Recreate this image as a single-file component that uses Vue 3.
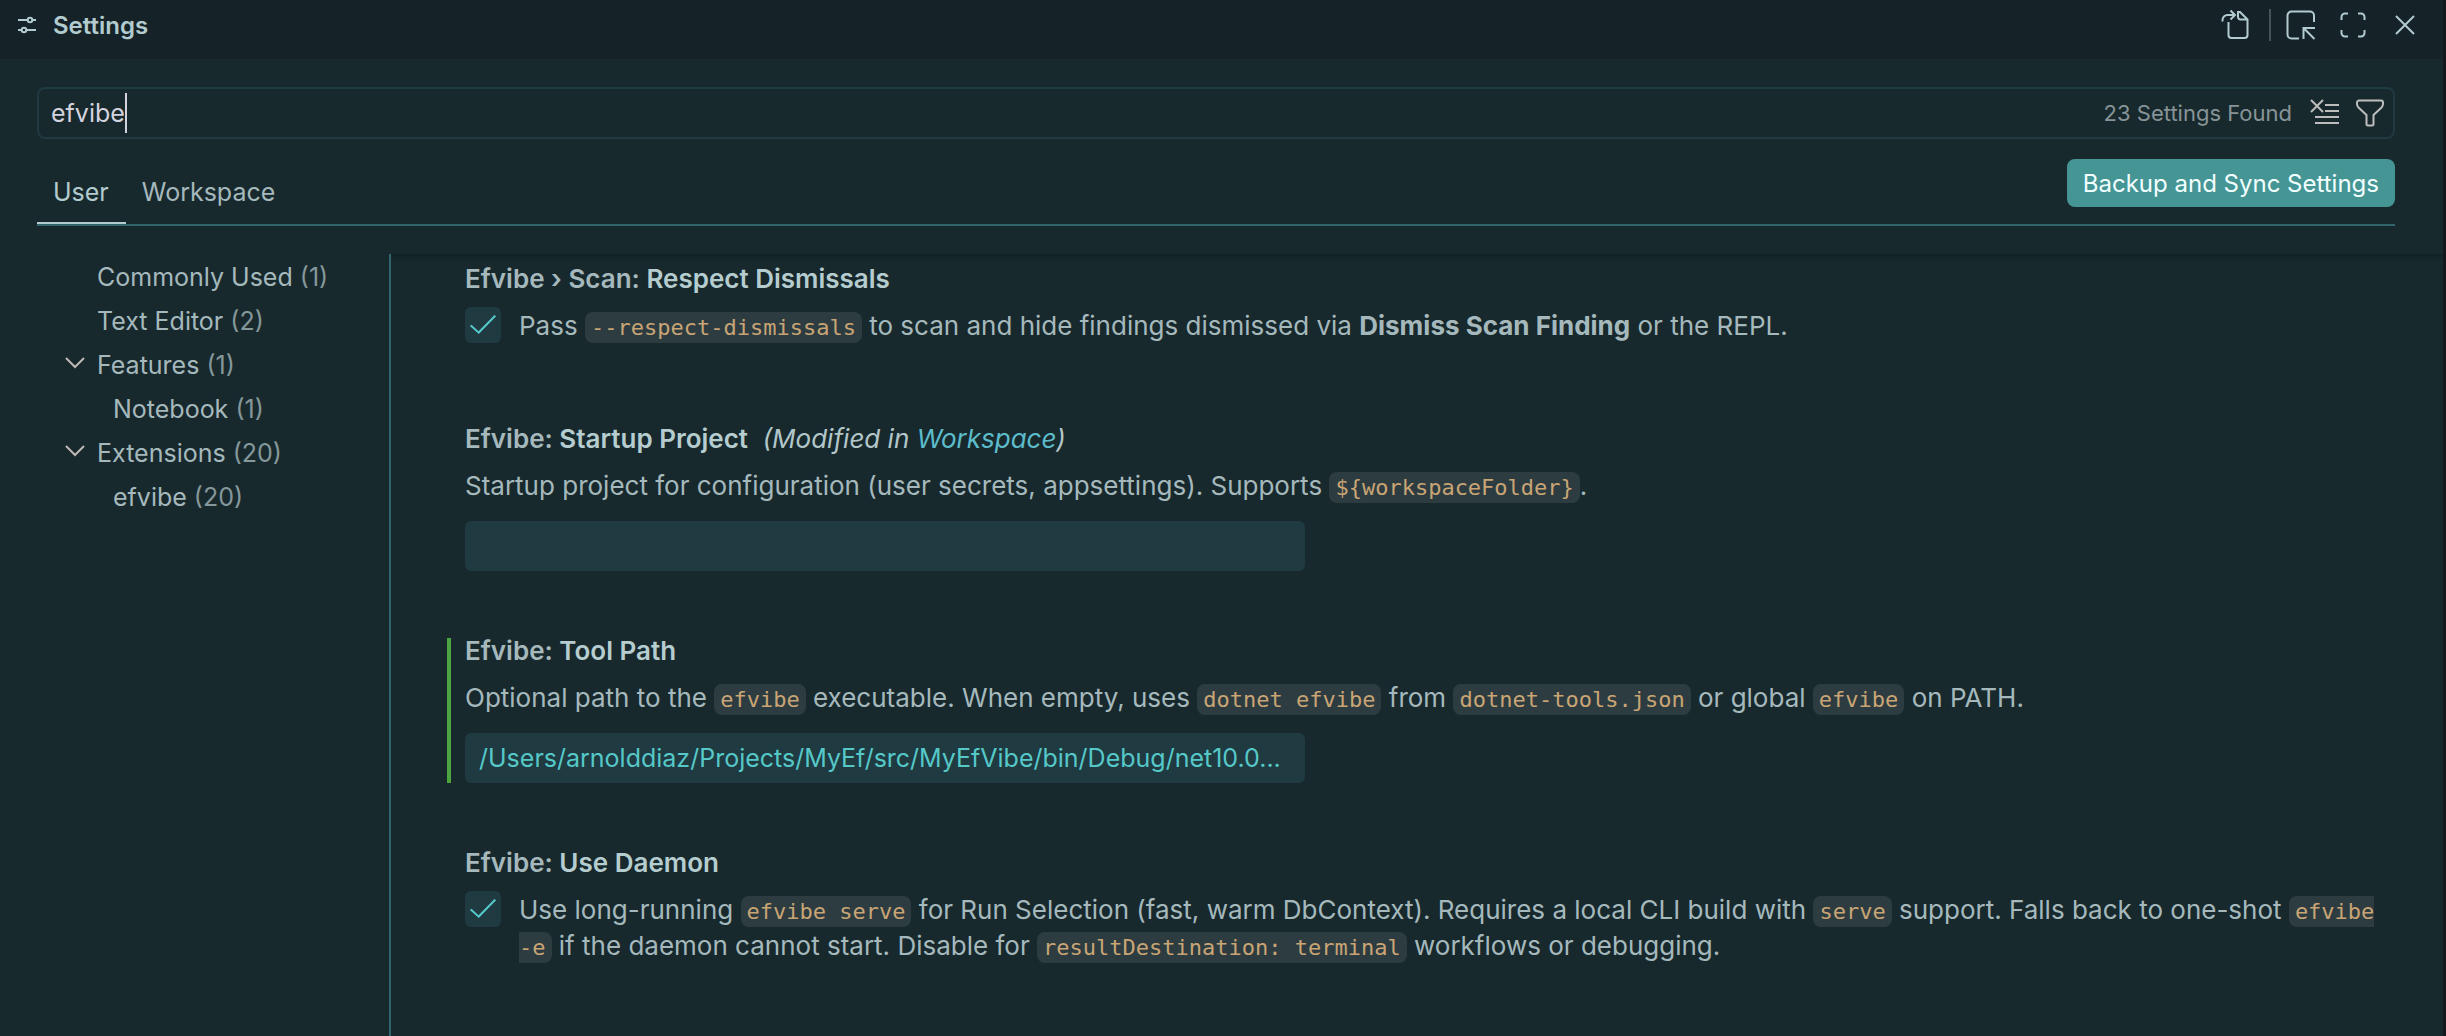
<template>
  <div class="window">
    <div class="settings-editor">
      <header class="title-bar">
        <svg class="title-icon" viewBox="0 0 20 18" aria-hidden="true">
          <path d="M1 4h9M16 4h3M1 14h3M10 14h9" />
          <circle cx="13" cy="4" r="2.3" />
          <circle cx="7" cy="14" r="2.3" />
        </svg>
        <h1>Settings</h1>
        <div class="title-actions">
          <button type="button" aria-label="Open Settings (JSON)">
            <svg viewBox="0 0 32 32">
              <path d="M3.5 12.500V11a5 5 0 0 1 5-5h7M11.500 1.500L16 6l-4.500 4.500" />
              <path d="M9.500 13v13a3 3 0 0 0 3 3h13a3 3 0 0 0 3-3V10.500L21 3h-2v5a2.500 2.500 0 0 0 2.500 2.500h7" />
            </svg>
          </button>
          <span class="separator"></span>
          <button type="button" aria-label="Move into New Window">
            <svg viewBox="0 0 32 32">
              <path d="M14 29.500H6.500a4 4 0 0 1-4-4v-19a4 4 0 0 1 4-4H25a4 4 0 0 1 4 4V13" />
              <path d="M30 19H18.500v11M19 19.500L29.500 30" />
            </svg>
          </button>
          <button type="button" aria-label="Maximize">
            <svg viewBox="0 0 32 32">
              <path d="M4.500 11V8a3.500 3.500 0 0 1 3.500-3.500h3M21 4.500h3A3.500 3.500 0 0 1 27.500 8v3M27.500 21v3a3.500 3.500 0 0 1-3.500 3.500h-3M11 27.500H8A3.500 3.500 0 0 1 4.500 24v-3" />
            </svg>
          </button>
          <button type="button" aria-label="Close">
            <svg viewBox="0 0 32 32"><path d="M7 7l18 18M25 7L7 25" /></svg>
          </button>
        </div>
      </header>

      <div class="search-box">
        <input v-model="query" class="search-input" type="text" size="6" aria-label="Search settings" />
        <span class="caret"></span>
        <span class="result-count">23 Settings Found</span>
        <button type="button" aria-label="Clear Settings Search Input">
          <svg viewBox="0 0 32 32">
            <path d="M3 3l12 12M15 3L3 15M17 8h14M17 14h14M7 20h24M7 26h24" />
          </svg>
        </button>
        <button type="button" aria-label="Filter Settings">
          <svg viewBox="0 0 32 32">
            <path d="M5 3.500h22a2 2 0 0 1 2 2V7a5 5 0 0 1-1.500 3.500L19.500 18v9a1.500 1.500 0 0 1-1.500 1.500h-4a1.500 1.500 0 0 1-1.500-1.500v-9L4.500 10.500A5 5 0 0 1 3 7V5.500a2 2 0 0 1 2-2z" />
          </svg>
        </button>
      </div>

      <div class="tab-row">
        <nav class="tabs">
          <button
            v-for="tab in tabs"
            :key="tab"
            type="button"
            :class="['tab', { active: tab === activeTab }]"
            @click="activeTab = tab"
          >
            {{ tab }}
          </button>
        </nav>
        <button type="button" class="sync-button">Backup and Sync Settings</button>
      </div>

      <div class="body">
        <ul class="toc">
          <li
            v-for="entry in toc"
            :key="entry.label"
            :class="{ nested: entry.nested }"
          >
            <svg v-if="entry.open" class="chevron" viewBox="0 0 20 12" aria-hidden="true">
              <path d="M1 1l9 9 9-9" />
            </svg>
            <span>{{ entry.label }} <span class="count">({{ entry.count }})</span></span>
          </li>
        </ul>

        <main class="settings-list">
          <section
            v-for="item in settings"
            :key="item.label"
            :class="['setting', item.type, { modified: item.modified }]"
          >
            <h2>
              <span class="category">{{ item.category }}: </span>{{ item.label }}
              <em v-if="item.scope" class="scope">(Modified in <a href="#">{{ item.scope }}</a>)</em>
            </h2>
            <div class="setting-row">
              <input
                v-if="item.type === 'bool'"
                :id="item.id"
                v-model="item.value"
                type="checkbox"
                class="checkbox"
              />
              <label :for="item.id" class="description">
                <template v-for="(part, i) in item.description" :key="i">
                  <component :is="part.tag" v-if="part.tag">{{ part.text }}</component>
                  <template v-else>{{ part }}</template>
                </template>
              </label>
            </div>
            <input
              v-if="item.type === 'text'"
              :id="item.id"
              v-model="item.value"
              type="text"
              class="text-input"
            />
          </section>
        </main>
      </div>
    </div>
  </div>
</template>

<script setup>
import { reactive, ref } from "vue";

const query = ref("efvibe");

const tabs = ["User", "Workspace"];
const activeTab = ref("User");

const toc = [
  { label: "Commonly Used", count: 1 },
  { label: "Text Editor", count: 2 },
  { label: "Features", count: 1, open: true },
  { label: "Notebook", count: 1, nested: true },
  { label: "Extensions", count: 20, open: true },
  { label: "efvibe", count: 20, nested: true },
];

const code = (text) => ({ tag: "code", text });
const bold = (text) => ({ tag: "strong", text });

const settings = reactive([
  {
    id: "respect-dismissals",
    category: "Efvibe › Scan",
    label: "Respect Dismissals",
    type: "bool",
    value: true,
    description: [
      "Pass ",
      code("--respect-dismissals"),
      " to scan and hide findings dismissed via ",
      bold("Dismiss Scan Finding"),
      " or the REPL.",
    ],
  },
  {
    id: "startup-project",
    category: "Efvibe",
    label: "Startup Project",
    type: "text",
    value: "",
    scope: "Workspace",
    description: [
      "Startup project for configuration (user secrets, appsettings). Supports ",
      code("${workspaceFolder}"),
      ".",
    ],
  },
  {
    id: "tool-path",
    category: "Efvibe",
    label: "Tool Path",
    type: "text",
    value: "/Users/arnolddiaz/Projects/MyEf/src/MyEfVibe/bin/Debug/net10.0...",
    modified: true,
    description: [
      "Optional path to the ",
      code("efvibe"),
      " executable. When empty, uses ",
      code("dotnet efvibe"),
      " from ",
      code("dotnet-tools.json"),
      " or global ",
      code("efvibe"),
      " on PATH.",
    ],
  },
  {
    id: "use-daemon",
    category: "Efvibe",
    label: "Use Daemon",
    type: "bool",
    value: true,
    description: [
      "Use long-running ",
      code("efvibe serve"),
      " for Run Selection (fast, warm DbContext). Requires a local CLI build with ",
      code("serve"),
      " support. Falls back to one-shot ",
      code("efvibe -e"),
      " if the daemon cannot start. Disable for ",
      code("resultDestination: terminal"),
      " workflows or debugging.",
    ],
  },
]);
</script>

<style>
body {
  margin: 0;
  background: #18292d;
}
</style>

<style scoped>
.window {
  box-sizing: border-box;
  min-height: 100vh;
  display: flex;
  border-right: 3px solid #141a1c;
  background: #18292d;
  color: #a5b9bd;
  font-family: Inter, "Liberation Sans", sans-serif;
  font-size: 25px;
}

.settings-editor {
  flex: 1;
  min-width: 0;
  display: flex;
  flex-direction: column;
}

button,
input {
  font: inherit;
}

button {
  padding: 0;
  border: none;
  background: none;
  color: inherit;
  cursor: pointer;
}

svg {
  display: block;
  fill: none;
  stroke: currentColor;
  stroke-width: 2;
}

button svg {
  width: 32px;
  height: 32px;
}

.title-bar {
  display: flex;
  align-items: center;
  height: 50px;
  padding: 0 22px 9px 17px;
  background: #152227;
  color: #b2cbce;
}

.title-icon {
  width: 20px;
  height: 18px;
  margin-right: 16px;
}

.title-bar h1 {
  margin: 0;
  font-size: 24px;
  font-weight: 600;
}

.title-actions {
  display: flex;
  align-items: center;
  gap: 20px;
  margin-left: auto;
}

.separator {
  width: 2px;
  height: 32px;
  margin: 0 -6px 0 -2px;
  background: #475459;
}

.search-box {
  box-sizing: border-box;
  display: flex;
  align-items: center;
  height: 52px;
  margin: 28px 48px 0 37px;
  padding: 0 7px 0 12px;
  border: 2px solid #1f3a41;
  border-radius: 8px;
  color: #bdbdbd;
}

.search-input {
  field-sizing: content;
  padding: 0;
  border: none;
  outline: none;
  background: none;
  color: #d3d3df;
}

.caret {
  width: 2px;
  height: 40px;
  background: #d3d3df;
}

.result-count {
  margin-left: auto;
  margin-right: 16px;
  font-size: 22px;
  color: #879497;
}

.search-box button + button {
  margin-left: 14px;
}

.tab-row {
  display: flex;
  justify-content: space-between;
  align-items: flex-start;
  height: 85px;
  margin: 0 48px 0 37px;
  border-bottom: 2px solid #33646d;
}

.tabs {
  display: flex;
  align-self: stretch;
}

.tab {
  padding: 23px 17px 0 16px;
  border-bottom: 2px solid transparent;
  color: #a5b9bd;
}

.tab.active {
  border-bottom-color: #b2cbce;
  color: #b2cbce;
}

.sync-button {
  height: 48px;
  margin-top: 20px;
  padding: 0 16px;
  border-radius: 8px;
  background: #459595;
  color: #f2ffff;
  font-size: 24px;
}

.body {
  flex: 1;
  display: flex;
  margin-top: 28px;
}

.toc {
  box-sizing: border-box;
  width: 391px;
  flex-shrink: 0;
  margin: 0;
  padding: 1px 0 0 65px;
  border-right: 2px solid #33646d;
  list-style: none;
}

.toc li {
  display: flex;
  align-items: center;
  height: 44px;
  padding-left: 32px;
}

.toc li:has(.chevron) {
  padding-left: 0;
}

.toc li.nested {
  padding-left: 48px;
}

.chevron {
  width: 20px;
  height: 12px;
  margin: 0 12px 4px 0;
  color: #bdb9b6;
}

.count {
  color: #84979a;
}

.settings-list {
  flex: 1;
  min-width: 0;
  padding: 12px 60px 0 56px;
  box-shadow: inset 0 6px 6px -6px #0d181c;
}

.setting {
  padding-left: 18px;
  margin-bottom: 67px;
}

.setting.bool {
  margin-bottom: 82px;
}

.setting:last-child {
  margin-bottom: 0;
}

.setting.modified {
  padding-left: 14px;
  border-left: 4px solid #4da53f;
}

h2 {
  margin: 0 0 16px;
  font-size: 26px;
  line-height: 26px;
  font-weight: 600;
  color: #b6cdd0;
}

.category {
  color: #a5b9bd;
}

.scope {
  margin-left: 8px;
  font-weight: 400;
  color: #b2c6c9;
}

.scope a {
  color: #5cbccb;
  text-decoration: none;
}

.setting-row {
  display: flex;
  gap: 18px;
}

.description {
  font-size: 26px;
  line-height: 36px;
}

code {
  padding: 3px 6px;
  border-radius: 8px;
  background: #2d3c41;
  color: #c9a575;
  font-family: "DejaVu Sans Mono", monospace;
  font-size: 22px;
  line-height: 26px;
}

.checkbox {
  appearance: none;
  flex-shrink: 0;
  display: grid;
  place-items: center;
  width: 36px;
  height: 36px;
  margin: -1px 0 0;
  border-radius: 6px;
  background: #1f3a41;
}

.checkbox:checked::before {
  content: "";
  width: 28px;
  height: 22px;
  background: #56c8c8;
  clip-path: polygon(3% 55%, 9% 49%, 34% 78%, 91% 4%, 97% 10%, 35% 91%);
}

.text-input {
  box-sizing: border-box;
  display: block;
  width: 100%;
  max-width: 840px;
  height: 50px;
  margin-top: 17px;
  padding: 0 14px;
  border: none;
  border-radius: 6px;
  background: #1f3a41;
  color: #56c8c8;
  text-overflow: ellipsis;
}
</style>
